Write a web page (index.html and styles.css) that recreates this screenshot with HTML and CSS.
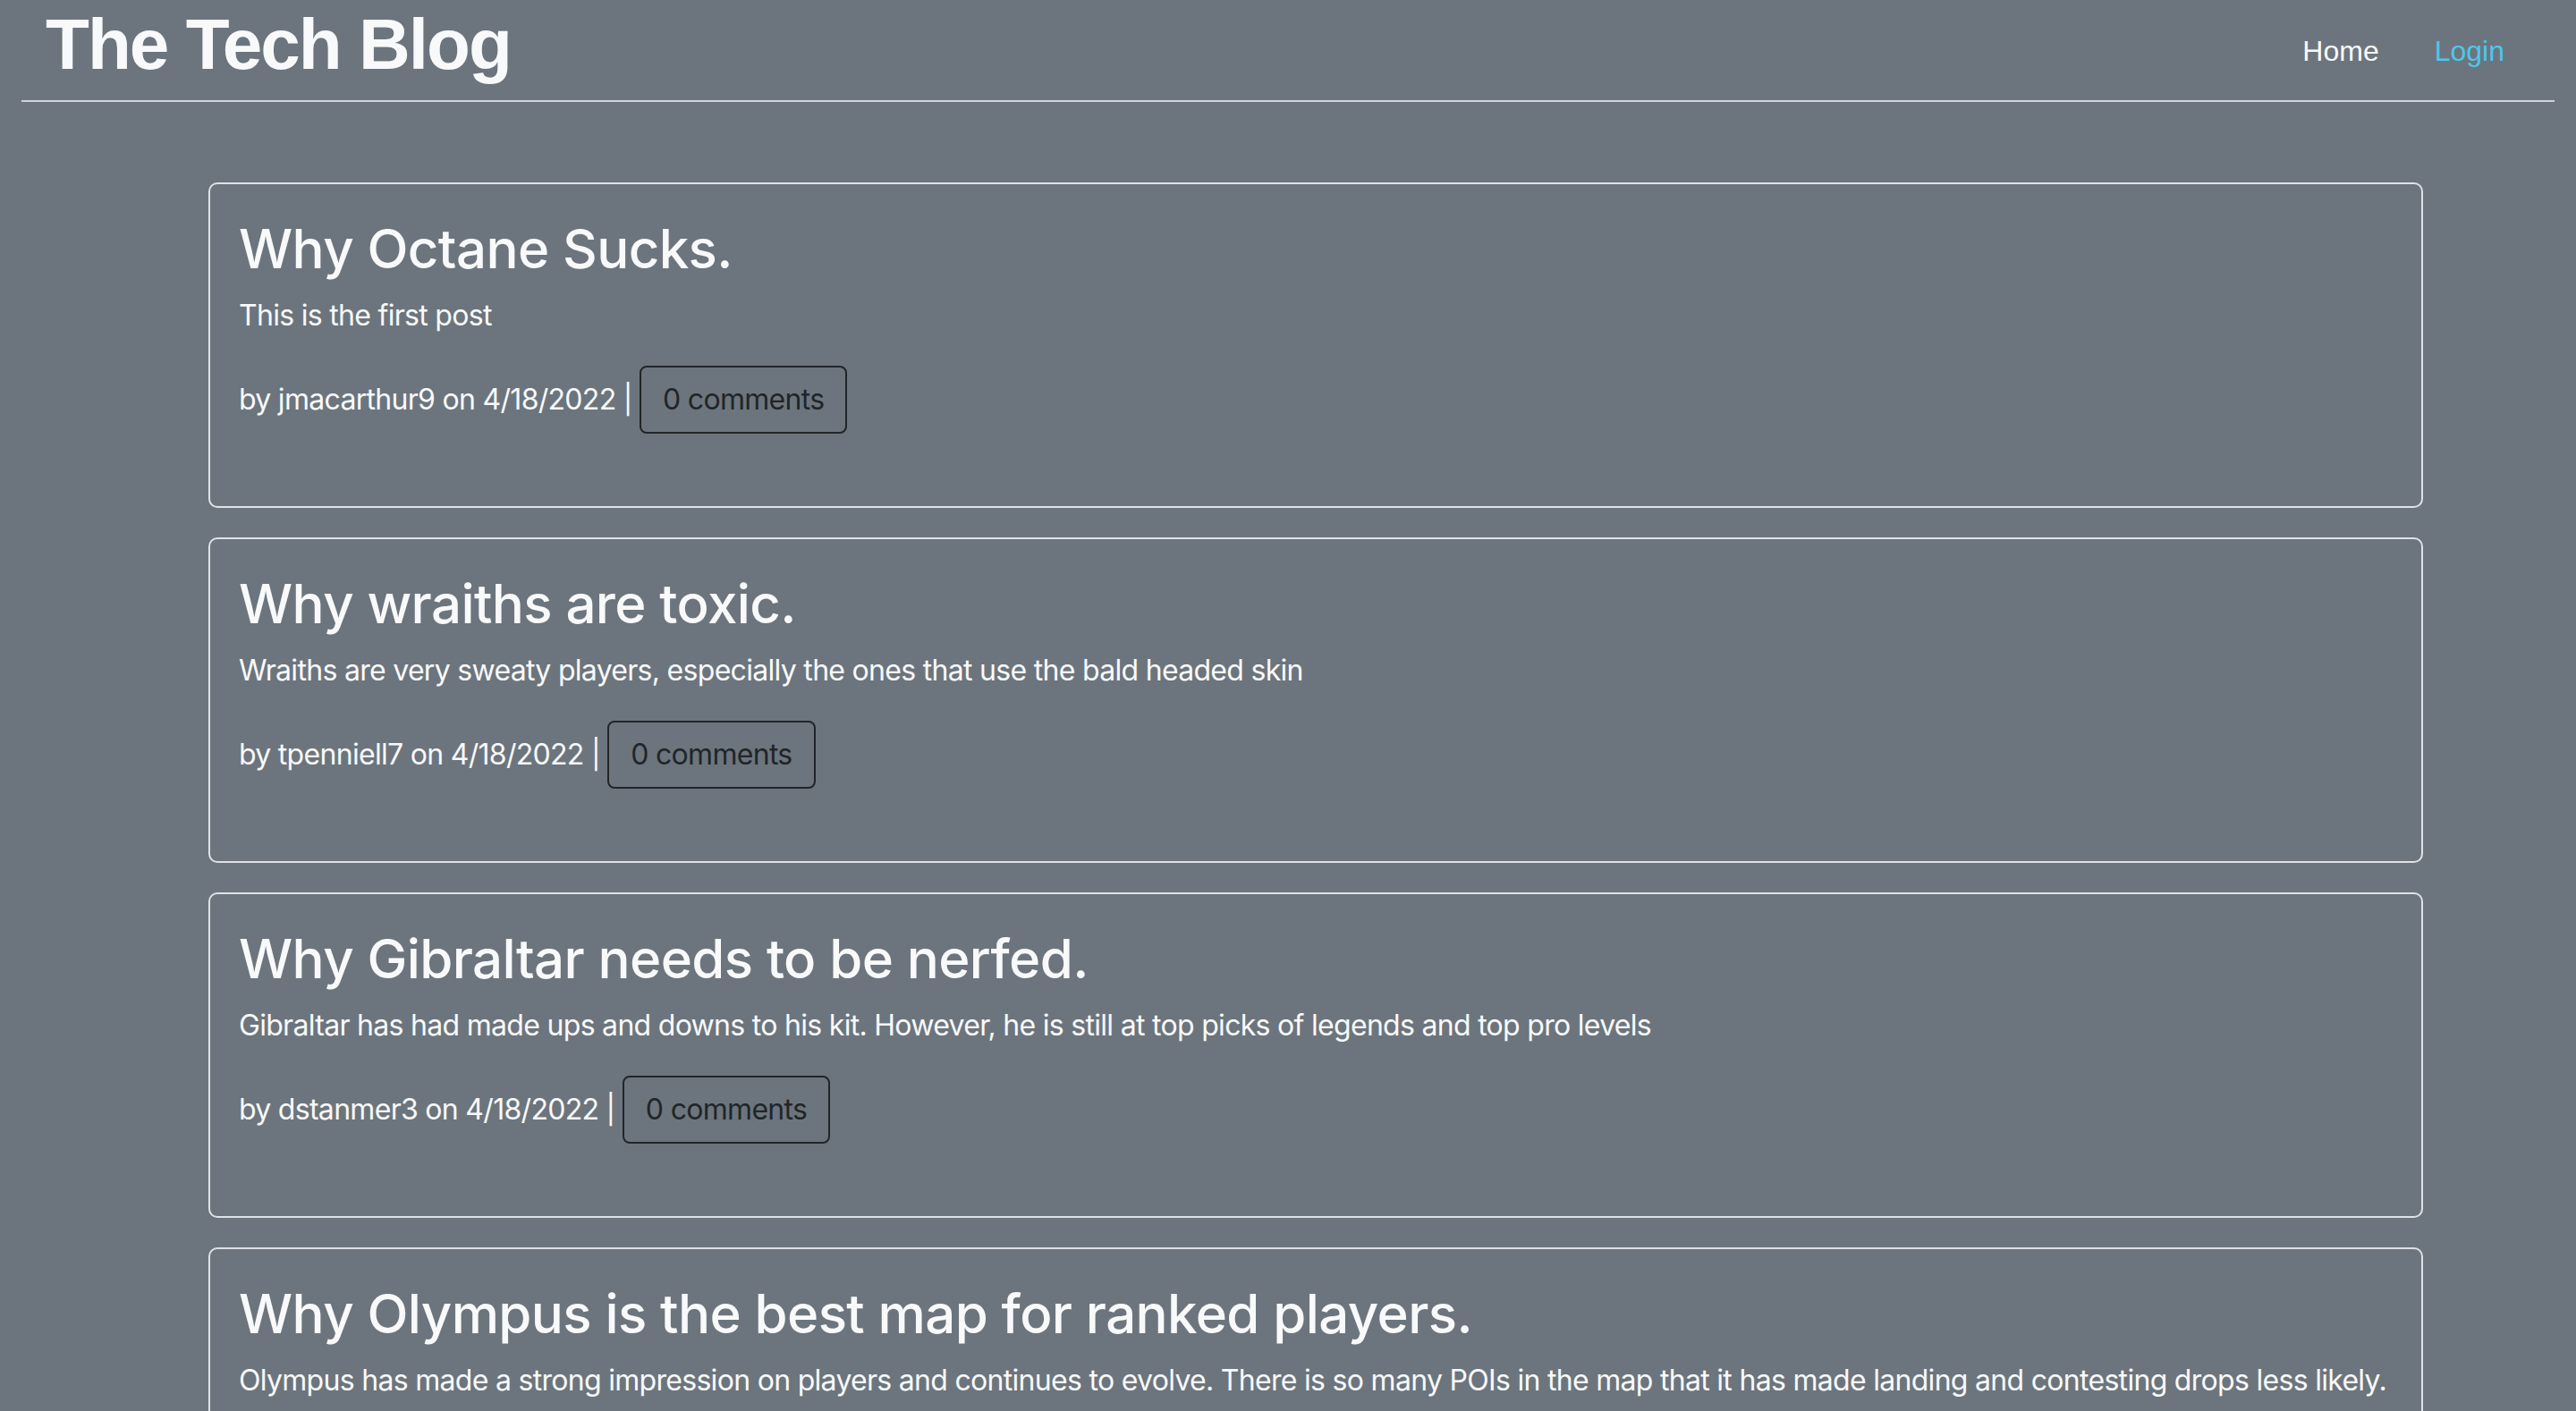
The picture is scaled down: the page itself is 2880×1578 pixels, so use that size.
FILE: index.html
```html
<!DOCTYPE html>
<html lang="en">
<head>
<meta charset="utf-8">
<title>The Tech Blog</title>
<link rel="stylesheet" href="styles.css">
</head>
<body>
<header class="site-header">
  <h1 class="brand">The Tech Blog</h1>
  <nav class="nav">
    <a class="nav-link" href="#">Home</a>
    <a class="nav-link nav-login" href="#">Login</a>
  </nav>
</header>
<main class="posts">
  <article class="card">
    <h2 class="card-title">Why Octane Sucks.</h2>
    <p class="card-text">This is the first post</p>
    <p class="card-meta">by jmacarthur9 on 4/18/2022 | <a class="btn" href="#">0 comments</a></p>
  </article>
  <article class="card">
    <h2 class="card-title">Why wraiths are toxic.</h2>
    <p class="card-text">Wraiths are very sweaty players, especially the ones that use the bald headed skin</p>
    <p class="card-meta">by tpenniell7 on 4/18/2022 | <a class="btn" href="#">0 comments</a></p>
  </article>
  <article class="card">
    <h2 class="card-title">Why Gibraltar needs to be nerfed.</h2>
    <p class="card-text">Gibraltar has had made ups and downs to his kit. However, he is still at top picks of legends and top pro levels</p>
    <p class="card-meta">by dstanmer3 on 4/18/2022 | <a class="btn" href="#">0 comments</a></p>
  </article>
  <article class="card">
    <h2 class="card-title">Why Olympus is the best map for ranked players.</h2>
    <p class="card-text">Olympus has made a strong impression on players and continues to evolve. There is so many POIs in the map that it has made landing and contesting drops less likely.</p>
    <p class="card-meta">by jmacarthur9 on 4/18/2022 | <a class="btn" href="#">0 comments</a></p>
  </article>
</main>
</body>
</html>
```

FILE: styles.css
```css
html, body {
  margin: 0;
  padding: 0;
}
body {
  background: #6c757d;
  color: #f8f9fa;
  font-family: Inter, "Liberation Sans", Arial, sans-serif;
  font-size: 32px;
  line-height: 1.5;
}
.site-header {
  display: flex;
  justify-content: space-between;
  align-items: flex-start;
  margin: 0 24px;
  padding: 2px 56px 14px 27px;
  border-bottom: 2px solid #ced4da;
}
.brand {
  margin: 0;
  font-family: "Liberation Sans", Arial, sans-serif;
  font-weight: 700;
  font-size: 80px;
  line-height: 96px;
  letter-spacing: -1.95px;
  color: #f8f9fa;
}
.nav {
  display: flex;
  gap: 62px;
  padding-top: 35px;
}
.nav-link {
  font-family: "Liberation Sans", Arial, sans-serif;
  font-size: 32px;
  line-height: 40px;
  color: #f8f9fa;
  text-decoration: none;
}
.nav-login {
  color: #4fc6ec;
}
.posts {
  display: flex;
  flex-direction: column;
  gap: 33px;
  margin: 90px 171px 0 233px;
}
.card {
  border: 2px solid #dee2e6;
  border-radius: 10px;
  padding: 36px 32px 81px;
}
.card-title {
  margin: 0 0 15px;
  font-size: 60px;
  font-weight: 500;
  line-height: 72px;
  letter-spacing: -0.6px;
}
.card-text {
  margin: 0 0 32px;
  font-size: 32px;
  line-height: 48px;
  letter-spacing: -0.7px;
}
.card-meta {
  margin: 0;
  font-size: 32px;
  line-height: 48px;
  letter-spacing: -0.7px;
}
.btn {
  display: inline-block;
  padding: 12px 24px;
  border: 2px solid #212529;
  border-radius: 8px;
  color: #212529;
  text-decoration: none;
  font-size: 32px;
  line-height: 48px;
  letter-spacing: -0.7px;
}
```
